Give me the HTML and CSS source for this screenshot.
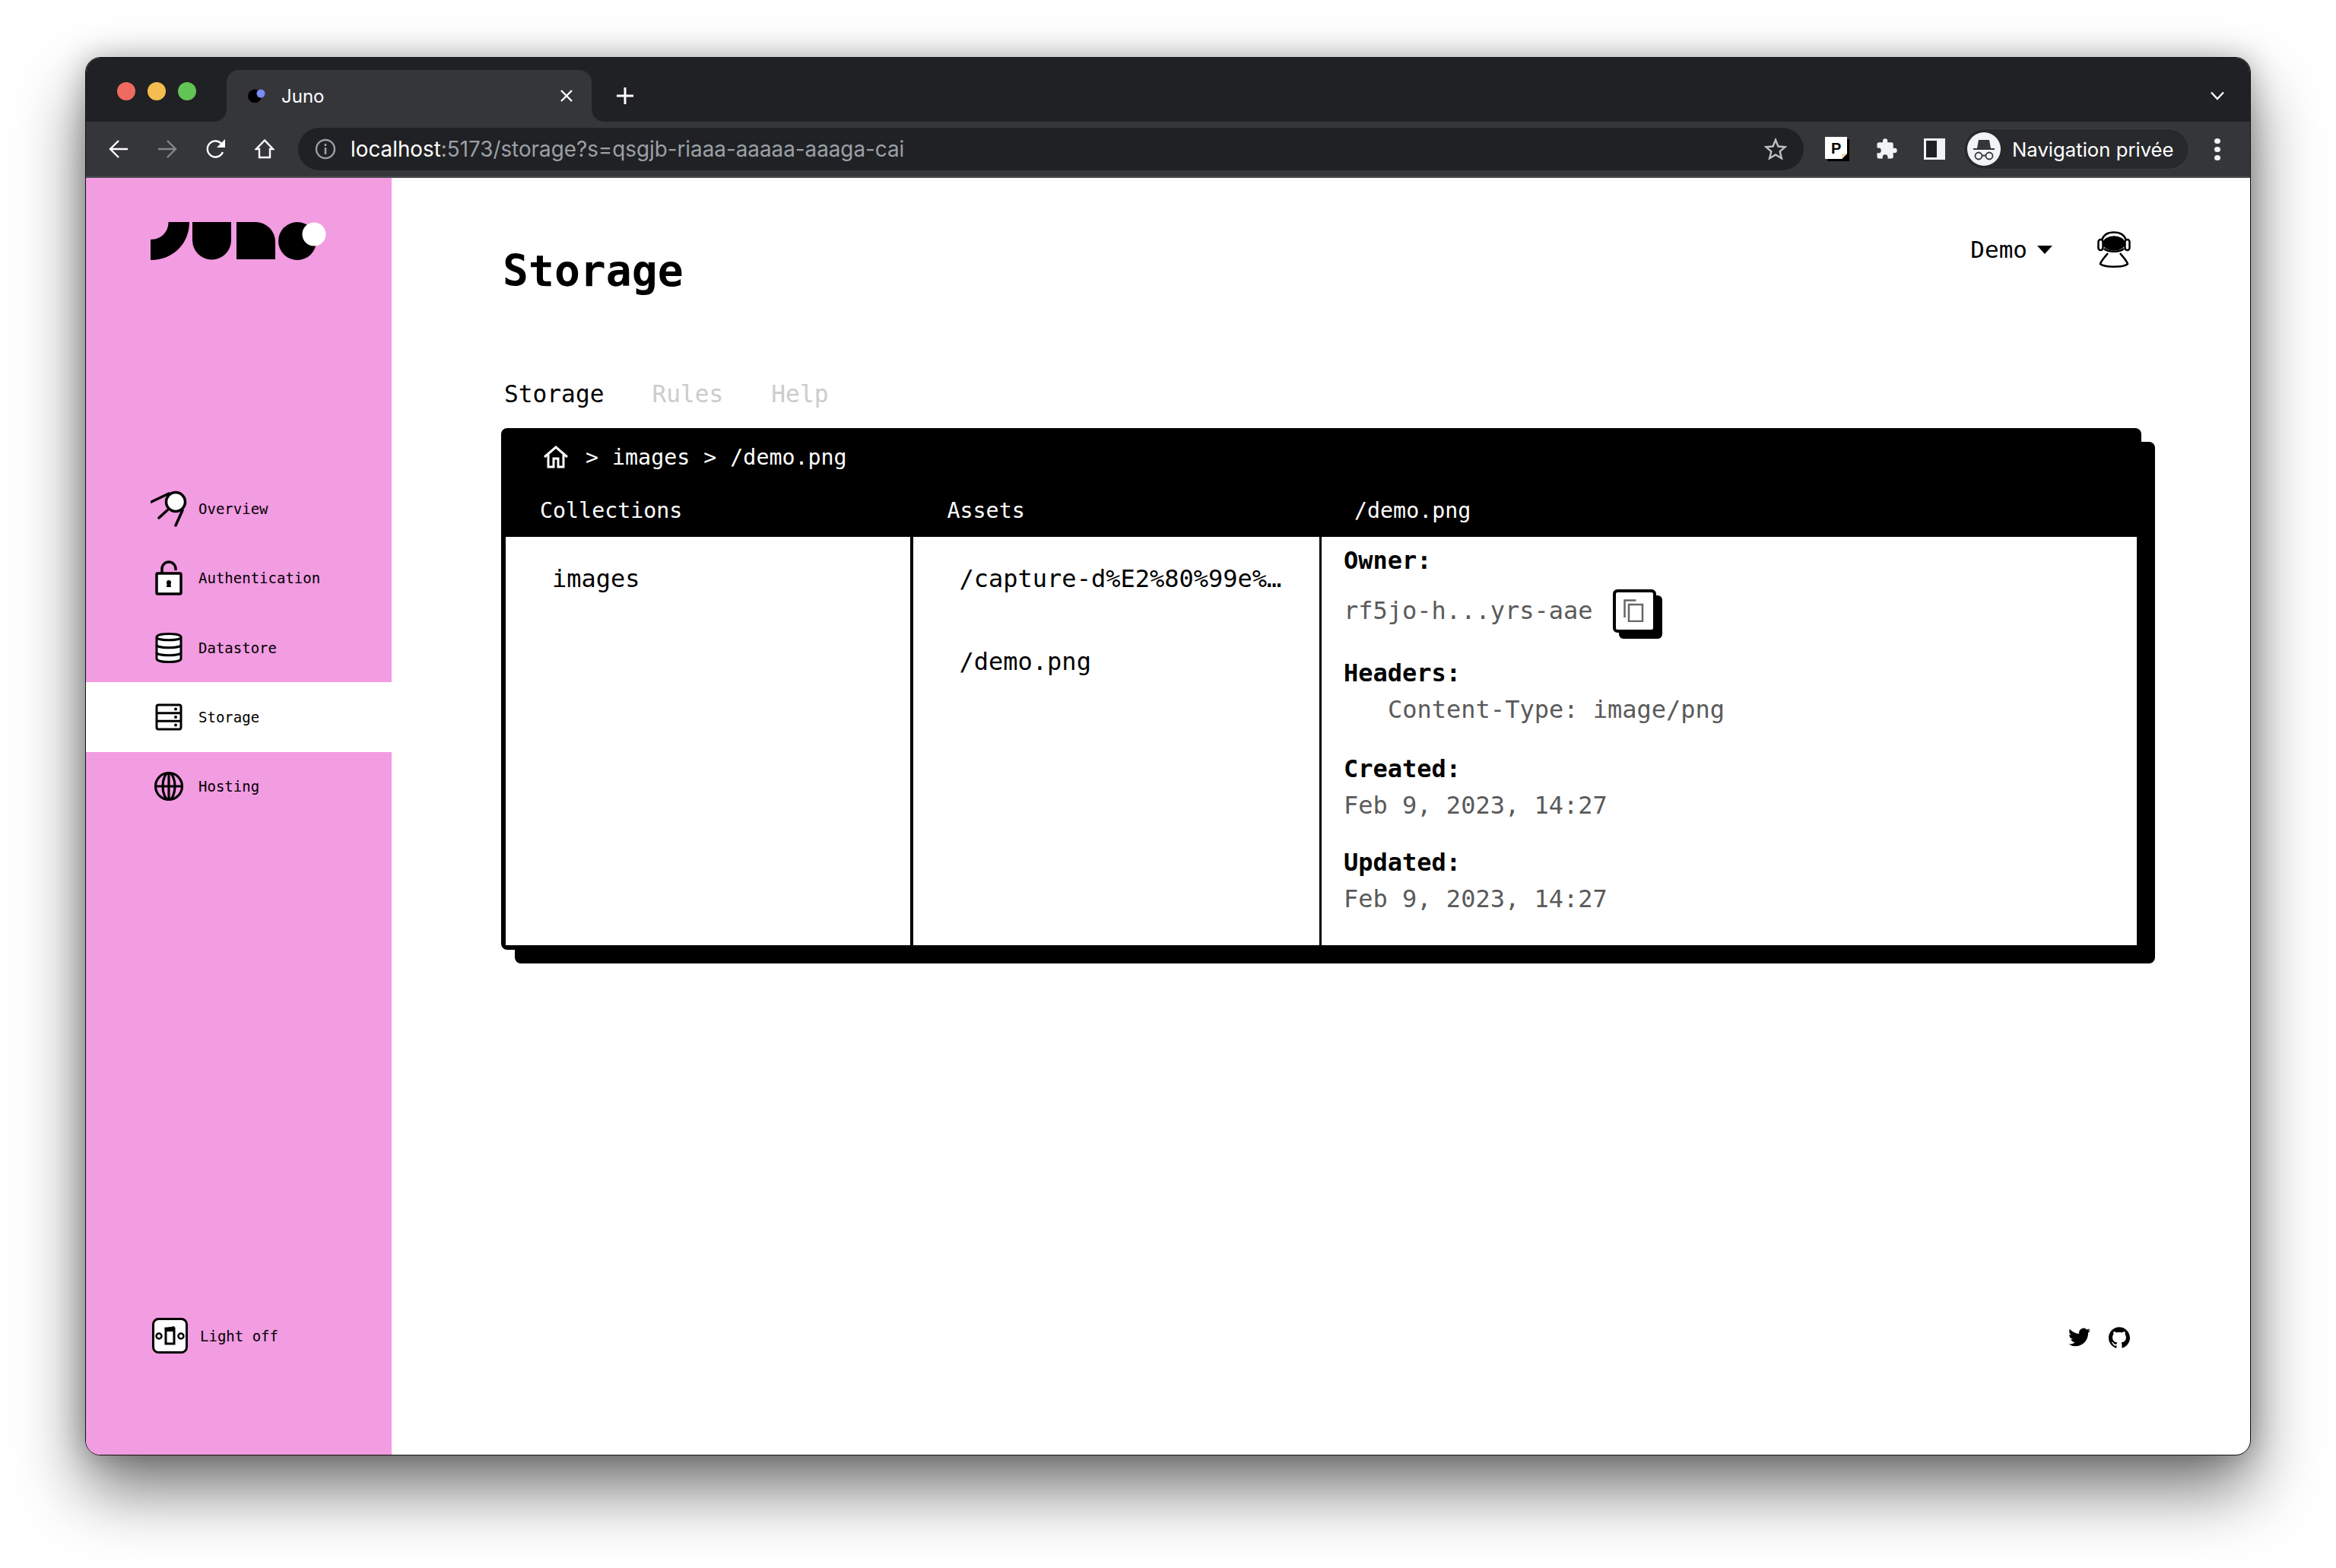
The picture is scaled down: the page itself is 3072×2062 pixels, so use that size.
FILE: index.html
```html
<!DOCTYPE html>
<html lang="en">
<head>
  <meta charset="UTF-8">
  <title>Juno</title>
  <link rel="stylesheet" href="styles.css">
</head>
<body>
  <div class="window">
    <div class="tabstrip">
      <div class="lights"><i class="red"></i><i class="yellow"></i><i class="green"></i></div>
      <div class="tab">
        <svg class="favicon" viewBox="0 0 23 18"><ellipse cx="9" cy="9.5" rx="9" ry="9" fill="#000"/><ellipse cx="17" cy="6" rx="5.5" ry="5.5" fill="#7b8cf5"/></svg>
        <span class="tab-title">Juno</span>
        <svg class="tab-close" viewBox="0 0 18 18"><path d="M2 2l14 14M16 2L2 16" stroke="#fff" stroke-width="2.4"/></svg>
      </div>
      <svg class="tab-new" viewBox="0 0 24 24"><path d="M12 1v22M1 12h22" stroke="#fff" stroke-width="3"/></svg>
      <svg class="tab-list" viewBox="0 0 20 12"><path d="M2 1.500l8 8.500 8-8.500" fill="none" stroke="#fff" stroke-width="2.400"/></svg>
    </div>

    <div class="toolbar">
      <svg class="tool" viewBox="0 0 26 26"><path d="M25 13H3M13 2L2 13l11 11" fill="none" stroke="#fff" stroke-width="2.400"/></svg>
      <svg class="tool" viewBox="0 0 26 26"><path d="M1 13h22M13 2l11 11-11 11" fill="none" stroke="#85878a" stroke-width="2.400"/></svg>
      <svg class="tool" viewBox="0 0 26 26"><path d="M22 17a10.500 10.500 0 1 1-1-10" fill="none" stroke="#fff" stroke-width="2.400"/><path d="M25 0v11H14z" fill="#fff"/></svg>
      <svg class="tool" viewBox="0 0 26 26"><path d="M13 1.500L2 13h4v11h14V13h4z" fill="none" stroke="#fff" stroke-width="2.400"/></svg>

      <div class="omnibox">
        <svg class="info" viewBox="0 0 28 28"><circle cx="14" cy="14" r="12" fill="none" stroke="#9aa0a6" stroke-width="2.400"/><path d="M14 12v9M14 7v3" stroke="#9aa0a6" stroke-width="2.600"/></svg>
        <span class="url"><b>localhost</b>:5173/storage?s=qsgjb-riaaa-aaaaa-aaaga-cai</span>
        <svg class="star" viewBox="0 0 30 30"><path d="M15 3l3.500 8.500 9.200.700-7 6 2.200 9L15 22.400 7.100 27.200l2.200-9-7-6 9.200-.700z" fill="none" stroke="#bdc1c6" stroke-width="2.400"/></svg>
      </div>

      <svg class="ext-p" viewBox="0 0 32 32"><rect x="3" y="3" width="29" height="29" rx="1" fill="#000"/><path d="M0 0h29v22l-7 7H0z" fill="#fff"/><path d="M22 29v-7h7z" fill="#f5dcb0"/><text class="ext-p-mark" x="8" y="22">P</text></svg>
      <svg class="ext-puzzle" viewBox="0 0 24 24"><path d="M20.500 11H19V7a2 2 0 0 0-2-2h-4V3.500a2.500 2.500 0 0 0-5 0V5H4a2 2 0 0 0-2 2v3.800h1.500a2.700 2.700 0 0 1 0 5.400H2V20a2 2 0 0 0 2 2h3.800v-1.500a2.700 2.700 0 0 1 5.400 0V22H17a2 2 0 0 0 2-2v-4h1.500a2.500 2.500 0 0 0 0-5z" fill="#f1f3f4"/></svg>
      <div class="ext-panel"></div>

      <div class="incognito">
        <svg class="incognito-face" viewBox="0 0 44 44"><circle cx="22" cy="22" r="22" fill="#f1f3f4"/><path d="M15 10h14l2 11H13z" fill="#35363a"/><path d="M8 22h28" stroke="#35363a" stroke-width="2"/><circle cx="15" cy="31" r="4.500" fill="none" stroke="#35363a" stroke-width="1.800"/><circle cx="29" cy="31" r="4.500" fill="none" stroke="#35363a" stroke-width="1.800"/><path d="M19.500 30.500h5" stroke="#35363a" stroke-width="1.800"/></svg>
        <span>Navigation privée</span>
      </div>
      <div class="dots"><i></i><i></i><i></i></div>
    </div>

    <div class="app">
      <aside class="sidebar">
        <svg class="logo" viewBox="0 0 231 50">
          <path d="M23.500 0H51C51 28 30 50 0 50V23C15 23 23.500 12 23.500 0z"/>
          <path d="M55 0h51v24a25.500 25.500 0 0 1-51 0z"/>
          <path d="M113 0h25a26 26 0 0 1 26 26v23h-51z"/>
          <circle cx="193" cy="25" r="25"/>
          <circle cx="215" cy="16" r="15.500" fill="#fff"/>
        </svg>

        <nav class="menu">
          <a class="menu-item">
            <svg class="menu-icon" viewBox="0 0 48 48" stroke="#000" stroke-width="3.500" fill="none" stroke-linecap="round"><circle cx="33" cy="15" r="12.500" fill="#fff"/><path d="M1 15L24 4M11 36l11-10M33 46l9-20"/></svg>
            Overview
          </a>
          <a class="menu-item">
            <svg class="menu-icon" viewBox="0 0 48 48" stroke="#000" stroke-width="3.500" fill="none"><path d="M15 18v-6a9 9 0 0 1 18 0v2"/><rect x="8" y="18" width="32" height="27" rx="1.500" fill="#fff"/><circle cx="24" cy="30" r="3" fill="#000" stroke="none"/><path d="M22 30h4l1 6h-6z" fill="#000" stroke="none"/></svg>
            Authentication
          </a>
          <a class="menu-item">
            <svg class="menu-icon" viewBox="0 0 48 48" stroke="#000" stroke-width="3" fill="none"><path d="M8 10c0-6 32-6 32 0v28c0 6-32 6-32 0z" fill="#fff"/><path d="M8 10c0 5 32 5 32 0M8 20c0 5 32 5 32 0M8 30c0 5 32 5 32 0"/></svg>
            Datastore
          </a>
          <a class="menu-item active">
            <svg class="menu-icon" viewBox="0 0 48 48" stroke="#000" stroke-width="3" fill="none"><rect x="8" y="8" width="32" height="32" rx="2.500"/><path d="M8 18.700h32M8 29.300h32"/><circle cx="33" cy="13.500" r="2" fill="#000" stroke="none"/><circle cx="33" cy="24" r="2" fill="#000" stroke="none"/><circle cx="33" cy="34.500" r="2" fill="#000" stroke="none"/></svg>
            Storage
          </a>
          <a class="menu-item">
            <svg class="menu-icon" viewBox="0 0 48 48" stroke="#000" stroke-width="3.200" fill="none"><circle cx="24" cy="24" r="17.500"/><ellipse cx="24" cy="24" rx="8" ry="17.500"/><path d="M24 6.500v35M6.500 24h35"/></svg>
            Hosting
          </a>
        </nav>

        <a class="theme-toggle">
          <svg class="theme-icon" viewBox="0 0 47 47" stroke="#000" fill="none"><rect x="1.500" y="1.500" width="44" height="44" rx="7" fill="#fff" stroke-width="3"/><circle cx="9" cy="24" r="3.500" stroke-width="2.500"/><circle cx="38" cy="24" r="3.500" stroke-width="2.500"/><rect x="18" y="14" width="11" height="20" stroke-width="3"/><path d="M17 14l12-2.500v6H18z" fill="#000" stroke-width="1"/></svg>
          Light off
        </a>
      </aside>

      <main class="content">
        <header class="page-head">
          <h1>Storage</h1>
          <div class="account">
            <span>Demo</span>
            <i class="caret"></i>
            <svg class="avatar" viewBox="0 0 44 48" stroke="#000" stroke-width="2.500" fill="none"><path d="M6 12C8 5 14 1.500 22 1.500S36 5 38 12"/><rect x="1.500" y="11" width="6" height="14" rx="3"/><rect x="36.500" y="11" width="6" height="14" rx="3"/><ellipse cx="22" cy="16" rx="13.500" ry="8.500" fill="#000"/><path d="M9 23c5 5 21 5 26 0"/><path d="M14 29C10 34 5 39 4 43c5 5 31 5 36 0-1-4-6-9-10-14"/></svg>
          </div>
        </header>

        <div class="tabs">
          <span class="tab-link on">Storage</span>
          <span class="tab-link">Rules</span>
          <span class="tab-link">Help</span>
        </div>

        <section class="card">
          <div class="crumbs">
            <svg class="crumb-home" viewBox="0 0 34 30" fill="none" stroke="#fff" stroke-width="3"><path d="M2 15L17 2l15 13"/><path d="M7 12v16h7v-11h6v11h7V12"/></svg>
            <span>&gt;</span>
            <span>images</span>
            <span>&gt;</span>
            <span>/demo.png</span>
          </div>
          <div class="columns column-heads">
            <div>Collections</div>
            <div>Assets</div>
            <div class="head-last">/demo.png</div>
          </div>
          <div class="columns column-body">
            <div class="col">
              <div class="entry">images</div>
            </div>
            <div class="col">
              <div class="entry">/capture-d%E2%80%99e%…</div>
              <div class="entry">/demo.png</div>
            </div>
            <div class="col details">
              <div class="label">Owner:</div>
              <div class="owner">
                <span class="value">rf5jo-h...yrs-aae</span>
                <button class="copy">
                  <svg viewBox="0 0 28 30" fill="none" stroke="#666" stroke-width="2.500"><path d="M1.500 24V1.500h15"/><rect x="7" y="7" width="18" height="22"/></svg>
                </button>
              </div>
              <div class="label">Headers:</div>
              <div class="value indent">Content-Type: image/png</div>
              <div class="label gap">Created:</div>
              <div class="value">Feb 9, 2023, 14:27</div>
              <div class="label gap-small">Updated:</div>
              <div class="value">Feb 9, 2023, 14:27</div>
            </div>
          </div>
        </section>

        <footer class="socials">
          <svg class="twitter" viewBox="0 0 24 24"><path d="M23.953 4.570a10 10 0 0 1-2.825.775 4.958 4.958 0 0 0 2.163-2.723c-.951.555-2.005.959-3.127 1.184a4.920 4.920 0 0 0-8.384 4.482C7.690 8.095 4.067 6.130 1.640 3.162a4.822 4.822 0 0 0-.666 2.475c0 1.710.870 3.213 2.188 4.096a4.904 4.904 0 0 1-2.228-.616v.060a4.923 4.923 0 0 0 3.946 4.827 4.996 4.996 0 0 1-2.212.085 4.936 4.936 0 0 0 4.604 3.417 9.867 9.867 0 0 1-6.102 2.105c-.390 0-.779-.023-1.170-.067a13.995 13.995 0 0 0 7.557 2.209c9.053 0 13.998-7.496 13.998-13.985 0-.210 0-.420-.015-.630A9.935 9.935 0 0 0 24 4.590z"/></svg>
          <svg class="github" viewBox="0 0 24 24"><path d="M12 .297c-6.630 0-12 5.373-12 12 0 5.303 3.438 9.800 8.205 11.385.600.113.820-.258.820-.577 0-.285-.010-1.040-.015-2.040-3.338.724-4.042-1.610-4.042-1.610C4.422 18.070 3.633 17.700 3.633 17.700c-1.087-.744.084-.729.084-.729 1.205.084 1.838 1.236 1.838 1.236 1.070 1.835 2.809 1.305 3.495.998.108-.776.417-1.305.760-1.605-2.665-.300-5.466-1.332-5.466-5.930 0-1.310.465-2.380 1.235-3.220-.135-.303-.540-1.523.105-3.176 0 0 1.005-.322 3.300 1.230.960-.267 1.980-.399 3-.405 1.020.006 2.040.138 3 .405 2.280-1.552 3.285-1.230 3.285-1.230.645 1.653.240 2.873.120 3.176.765.840 1.230 1.910 1.230 3.220 0 4.610-2.805 5.625-5.475 5.920.420.360.810 1.096.810 2.220 0 1.606-.015 2.896-.015 3.286 0 .315.210.690.825.570C20.565 22.092 24 17.592 24 12.297c0-6.627-5.373-12-12-12"/></svg>
        </footer>
      </main>
    </div>
  </div>
</body>
</html>
```

FILE: styles.css
```css
* {
  box-sizing: border-box;
}

html,
body {
  margin: 0;
  background: #fff;
}

body {
  height: 2062px;
  padding: 75px 112px 0;
  overflow: hidden;
  font-family: "DejaVu Sans Mono", monospace;
  color: #000;
}

.window {
  width: 2848px;
  height: 1839px;
  display: flex;
  flex-direction: column;
  border: 1px solid #111;
  border-radius: 20px;
  overflow: hidden;
  background: #fff;
  box-shadow: 0 44px 88px rgba(0, 0, 0, 0.55), 0 0 36px rgba(0, 0, 0, 0.25);
}

/* browser chrome */
.tabstrip {
  height: 84px;
  flex: none;
  display: flex;
  align-items: flex-end;
  padding-left: 185px;
  background: #202124;
  position: relative;
  font-family: Inter, "Noto Sans", sans-serif;
}

.lights {
  position: absolute;
  left: 41px;
  top: 32px;
  display: flex;
  gap: 16px;
}

.lights i {
  width: 24px;
  height: 24px;
  border-radius: 50%;
}

.lights .red { background: #ee6a5f; }
.lights .yellow { background: #f5bd4f; }
.lights .green { background: #61c454; }

.tab {
  width: 480px;
  height: 68px;
  display: flex;
  align-items: center;
  padding: 0 24px 0 28px;
  background: #35363a;
  border-radius: 16px 16px 0 0;
  position: relative;
}

.tab::before,
.tab::after {
  content: "";
  position: absolute;
  bottom: 0;
  width: 16px;
  height: 16px;
}

.tab::before {
  left: -16px;
  background: radial-gradient(circle at 0 0, #202124 15.500px, #35363a 16px);
}

.tab::after {
  right: -16px;
  background: radial-gradient(circle at 100% 0, #202124 15.500px, #35363a 16px);
}

.favicon {
  width: 23px;
  height: 18px;
  margin-right: 21px;
}

.tab-title {
  flex: 1;
  font-size: 24px;
  color: #fff;
}

.tab-close {
  width: 18px;
  height: 18px;
}

.tab-new {
  width: 24px;
  height: 24px;
  margin: 0 0 22px 32px;
}

.tab-list {
  width: 20px;
  height: 12px;
  margin: 0 33px 28px auto;
}

.toolbar {
  height: 74px;
  flex: none;
  display: flex;
  align-items: center;
  padding: 0 30px;
  background: #35363a;
  border-bottom: 2px solid #4d4e52;
  font-family: Inter, "Noto Sans", sans-serif;
}

.tool {
  width: 26px;
  height: 26px;
  margin-right: 38px;
  flex: none;
}

.omnibox {
  width: 1980px;
  height: 56px;
  margin: 0 28px 0 -7px;
  padding: 0 22px;
  display: flex;
  align-items: center;
  background: #202124;
  border-radius: 28px;
}

.info {
  width: 28px;
  height: 28px;
  margin-right: 19px;
}

.url {
  flex: 1;
  font-size: 27.800px;
  color: #9aa0a6;
}

.url b {
  font-weight: 400;
  color: #fff;
}

.star {
  width: 30px;
  height: 30px;
}

.ext-p {
  width: 32px;
  height: 32px;
  margin-right: 34px;
}

.ext-p-mark {
  font-family: "Liberation Sans", sans-serif;
  font-size: 20px;
  font-weight: 700;
  fill: #000;
}

.ext-puzzle {
  width: 30px;
  height: 30px;
  margin-right: 34px;
}

.ext-panel {
  width: 28px;
  height: 28px;
  margin-right: 24px;
  border: 3px solid #f1f3f4;
  border-right-width: 11px;
  background: #202124;
}

.incognito {
  width: 297px;
  height: 54px;
  display: flex;
  align-items: center;
  gap: 15px;
  padding-left: 4px;
  flex: none;
  background: #28292c;
  border: 1px solid #3e3f43;
  border-radius: 27px;
  font-size: 25.700px;
  color: #fff;
}

.incognito-face {
  width: 44px;
  height: 44px;
}

.dots {
  width: 8px;
  margin-left: 33px;
  display: flex;
  flex-direction: column;
  gap: 4px;
}

.dots i {
  height: 7px;
  border-radius: 50%;
  background: #f1f3f4;
}

/* juno app */
.app {
  flex: 1;
  display: flex;
  min-height: 0;
}

.sidebar {
  width: 402px;
  flex: none;
  display: flex;
  flex-direction: column;
  padding-top: 58px;
  background: #f29ce2;
}

.logo {
  width: 231px;
  height: 50px;
  margin-left: 85px;
}

.menu {
  margin-top: 281.500px;
}

.menu-item {
  height: 91.250px;
  display: flex;
  align-items: center;
  gap: 15px;
  padding-left: 85px;
  font-size: 19px;
}

.menu-item.active {
  background: #fff;
}

.menu-icon {
  width: 48px;
  height: 48px;
}

.theme-toggle {
  margin: auto 0 133px 87px;
  display: flex;
  align-items: center;
  gap: 16px;
  font-size: 19px;
}

.theme-icon {
  width: 47px;
  height: 47px;
}

.content {
  flex: 1;
  display: flex;
  flex-direction: column;
  min-width: 0;
  padding: 0 143px 0 144px;
}

.page-head {
  height: 190px;
  display: flex;
  justify-content: space-between;
}

h1 {
  margin: 90px 0 0 2px;
  font-size: 56.400px;
  line-height: 66px;
  font-weight: 700;
}

.account {
  display: flex;
  align-items: center;
  height: 48px;
  margin: 70px 14px 0 0;
  font-size: 31px;
}

.caret {
  width: 0;
  height: 0;
  margin: 0 59px 0 13px;
  border-left: 10px solid transparent;
  border-right: 10px solid transparent;
  border-top: 11px solid #000;
}

.avatar {
  width: 44px;
  height: 48px;
}

.tabs {
  display: flex;
  gap: 63px;
  height: 139px;
  padding: 75px 0 0 4px;
  font-size: 31.200px;
  line-height: 38px;
  color: #ccc;
}

.tab-link.on {
  color: #000;
}

.card {
  height: 686px;
  display: flex;
  flex-direction: column;
  background: #000;
  border-radius: 8px;
  box-shadow: 18px 18px 0 #000;
}

.crumbs {
  height: 74px;
  display: flex;
  align-items: center;
  gap: 18px;
  padding: 2px 0 0 55px;
  font-size: 28.300px;
  color: #fff;
}

.crumb-home {
  width: 34px;
  height: 30px;
  margin-right: 4px;
}

.columns {
  display: grid;
  grid-template-columns: 532px 534px 1fr;
  column-gap: 3.500px;
}

.column-heads {
  height: 69px;
  padding: 0 6px;
  align-items: center;
  font-size: 28.300px;
  color: #fff;
}

.column-heads div {
  padding-left: 45px;
}

.column-heads .head-last {
  padding-left: 43px;
}

.column-body {
  flex: 1;
  margin: 0 6px 6px;
  font-size: 32px;
  line-height: 48px;
}

.col {
  min-width: 0;
  background: #fff;
  padding: 31px 25px 0 61px;
}

.entry {
  height: 109px;
  white-space: nowrap;
}

.details {
  padding: 7px 0 0 29px;
}

.label {
  font-weight: 700;
}

.value {
  color: #5a5a5a;
}

.indent {
  padding-left: 58px;
}

.gap {
  margin-top: 30px;
}

.gap-small {
  margin-top: 27px;
}

.owner {
  display: flex;
  align-items: center;
  gap: 26px;
  margin: 6px 0 21.500px;
  height: 72px;
}

.copy {
  width: 57px;
  height: 57px;
  padding: 0;
  display: flex;
  align-items: center;
  justify-content: center;
  background: #fff;
  border: 4px solid #000;
  border-radius: 6px;
  box-shadow: 8px 8px 0 #000;
}

.copy svg {
  width: 28px;
  height: 30px;
}

.socials {
  margin-top: auto;
  margin-bottom: 140px;
  display: flex;
  justify-content: flex-end;
  align-items: center;
  gap: 24px;
  padding-right: 15px;
}

.twitter {
  width: 29px;
  height: 29px;
}

.github {
  width: 28px;
  height: 28px;
}
```
